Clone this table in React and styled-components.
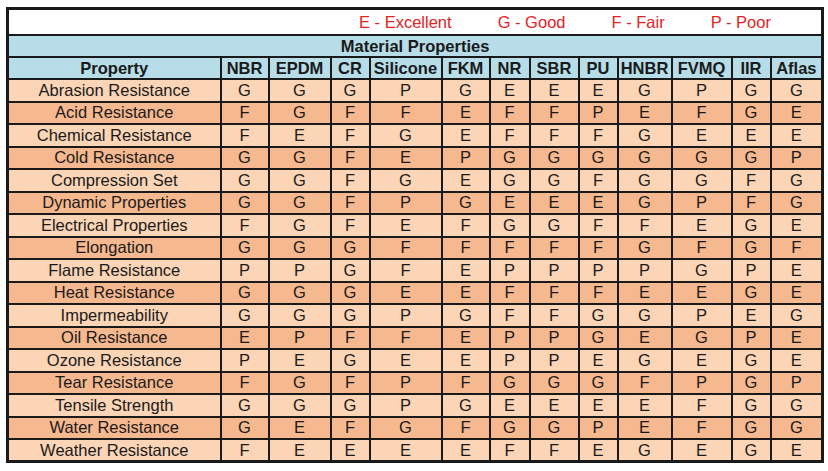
import styled, { createGlobalStyle } from "styled-components";

const GlobalStyle = createGlobalStyle`
    body {
        margin: 0;
        background: #ffffff;
        font-family: "Liberation Sans", Arial, sans-serif;
    }
`

const Page = styled.div`
    padding: 7px 0 0 6px;
`

const Table = styled.table`
    border-collapse: collapse;
    table-layout: fixed;
    width: 815px;
    border: 3px solid #1a1a1a;
    color: #1a1a1a;
    font-size: 16.5px;
`

const Cell = styled.td`
    border: 2px solid #1a1a1a;
    padding: 0;
    text-align: center;
    line-height: 19px;
    white-space: nowrap;
    overflow: hidden;
    background-color: ${({ $shade }) => ($shade ? "#f6b88e" : "#fbd5b6")};
`

const LegendCell = styled.td`
    border: 3px solid #1a1a1a;
    border-bottom-width: 2px;
    height: 24px;
    padding: 0;
    background: #ffffff;
`

const Legend = styled.div`
    display: flex;
    gap: 46px;
    padding-left: 350px;
    color: #e3231f;
    font-size: 16.5px;
`

const TitleCell = styled.td`
    border: 2px solid #1a1a1a;
    height: 20px;
    padding: 0;
    text-align: center;
    font-weight: bold;
    line-height: 19px;
    background: #b7dde8;
`

const HeadCell = styled.th`
    border: 2px solid #1a1a1a;
    height: 20px;
    padding: 0;
    font-weight: bold;
    line-height: 19px;
    white-space: nowrap;
    background: #b7dde8;
`

const Row = styled.tr`
    height: 22.5px;
`

const columns = [
    ["Property", 213],
    ["NBR", 48],
    ["EPDM", 62],
    ["CR", 39],
    ["Silicone", 72],
    ["FKM", 48],
    ["NR", 40],
    ["SBR", 49],
    ["PU", 39],
    ["HNBR", 54],
    ["FVMQ", 60],
    ["IIR", 39],
    ["Aflas", 52],
];

const rows = [
    ["Abrasion Resistance", "GGGPGEEEGPGG"],
    ["Acid Resistance", "FGFFEFFPEFGE"],
    ["Chemical Resistance", "FEFGEFFFGEEE"],
    ["Cold Resistance", "GGFEPGGGGGGP"],
    ["Compression Set", "GGFGEGGFGGFG"],
    ["Dynamic Properties", "GGFPGEEEGPFG"],
    ["Electrical Properties", "FGFEFGGFFEGE"],
    ["Elongation", "GGGFFFFFGFGF"],
    ["Flame Resistance", "PPGFEPPPPGPE"],
    ["Heat Resistance", "GGGEEFFFEEGE"],
    ["Impermeability", "GGGPGFFGGPEG"],
    ["Oil Resistance", "EPFFEPPGEGPE"],
    ["Ozone Resistance", "PEGEEPPEGEGE"],
    ["Tear Resistance", "FGFPFGGGFPGP"],
    ["Tensile Strength", "GGGPGEEEEFGG"],
    ["Water Resistance", "GEFGFGGPEFGG"],
    ["Weather Resistance", "FEEEEFFEGEGE"],
];

const legend = ["E - Excellent", "G - Good", "F - Fair", "P - Poor"];

const App = () => {
    return (
        <Page>
            <GlobalStyle />
            <Table>
                <colgroup>
                    {columns.map(([name, width]) => <col key={name} style={{ width }} />)}
                </colgroup>
                <tbody>
                    <tr>
                        <LegendCell colSpan={columns.length}>
                            <Legend>
                                {legend.map(item => <span key={item}>{item}</span>)}
                            </Legend>
                        </LegendCell>
                    </tr>
                    <tr>
                        <TitleCell colSpan={columns.length}>Material Properties</TitleCell>
                    </tr>
                    <tr>
                        {columns.map(([name]) => <HeadCell key={name}>{name}</HeadCell>)}
                    </tr>
                    {rows.map(([property, ratings], i) => (
                        <Row key={property}>
                            <Cell $shade={i % 2 === 1}>{property}</Cell>
                            {ratings.split("").map((r, j) => (
                                <Cell key={j} $shade={i % 2 === 1}>{r}</Cell>
                            ))}
                        </Row>
                    ))}
                </tbody>
            </Table>
        </Page>
    )
}

export default App;
